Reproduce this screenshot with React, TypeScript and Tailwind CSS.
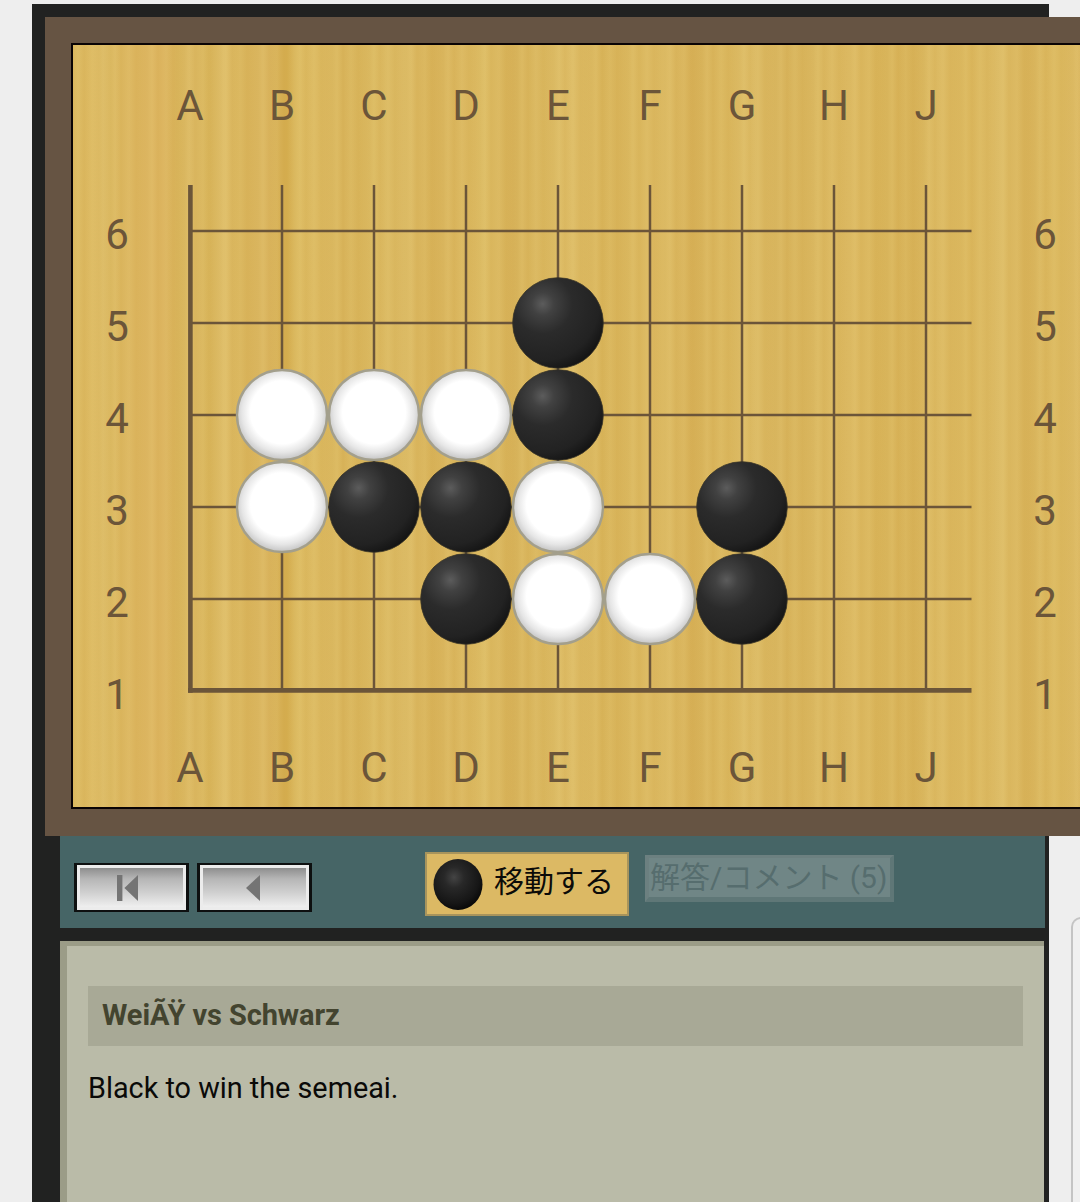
const cols = ["A", "B", "C", "D", "E", "F", "G", "H", "J"];
const rows = ["6", "5", "4", "3", "2", "1"];
const colX = (i: number) => 190.5 + i * 92;
const rowY = (i: number) => 231 + i * 92;
const whites: [number, number][] = [[282, 415], [374, 415], [466, 415], [282, 507], [558, 507], [558, 599], [650, 599]];
const blacks: [number, number][] = [[558, 323], [558, 415], [374, 507], [466, 507], [742, 507], [466, 599], [742, 599]];
const ink = "#6b5539";

function Board() {
  return (
    <svg viewBox="73 45 1010 762" className="block w-[1010px] h-[762px]">
      <defs>
        <radialGradient id="blackStone" cx="0.33" cy="0.29" r="0.78">
          <stop offset="0" stopColor="#5c5c5c" />
          <stop offset="0.16" stopColor="#414141" />
          <stop offset="0.42" stopColor="#2b2b2b" />
          <stop offset="0.8" stopColor="#222222" />
          <stop offset="1" stopColor="#121212" />
        </radialGradient>
        <radialGradient id="whiteStone" cx="0.5" cy="0.47" r="0.53">
          <stop offset="0" stopColor="#ffffff" />
          <stop offset="0.66" stopColor="#ffffff" />
          <stop offset="0.84" stopColor="#e6e6e6" />
          <stop offset="1" stopColor="#c4c4c4" />
        </radialGradient>
      </defs>
      {cols.map((c, i) => (
        <g key={c} fill={ink} fontSize="42" textAnchor="middle">
          <text x={colX(i) - 0.5} y="120">{c}</text>
          <text x={colX(i) - 0.5} y="782">{c}</text>
          {i > 0 && <line x1={colX(i) - 0.5} x2={colX(i) - 0.5} y1="185" y2="691" stroke={ink} strokeWidth="2.5" />}
        </g>
      ))}
      {rows.map((r, i) => (
        <g key={r} fill={ink} fontSize="42" textAnchor="middle">
          <text x="117" y={rowY(i) + 17.5}>{r}</text>
          <text x="1045" y={rowY(i) + 17.5}>{r}</text>
          {i < 5 && <line x1="190" x2="971.5" y1={rowY(i)} y2={rowY(i)} stroke={ink} strokeWidth="2.5" />}
        </g>
      ))}
      <line x1="190.4" x2="190.4" y1="185" y2="692.8" stroke={ink} strokeWidth="4.6" />
      <line x1="188" x2="971.5" y1="690.4" y2="690.4" stroke={ink} strokeWidth="4.6" />
      {whites.map(([x, y]) => (
        <circle key={`w${x}-${y}`} cx={x} cy={y} r="45" fill="url(#whiteStone)" stroke="#a39f8c" strokeWidth="2.4" />
      ))}
      {blacks.map(([x, y]) => (
        <circle key={`b${x}-${y}`} cx={x} cy={y} r="45.3" fill="url(#blackStone)" stroke="#3a3527" strokeWidth="0.8" />
      ))}
    </svg>
  );
}

function NavButton({ first }: { first?: boolean }) {
  return (
    <button className="w-[115px] h-[49px] box-border border-y-2 border-x-[3px] border-[#0e1010] p-0 shrink-0">
      <span
        className={
          first
            ? "flex items-center justify-center h-full border-[3px] border-[#ececec] bg-[linear-gradient(180deg,#8e8e8e_0%,#b6b6b6_28%,#cfcfcf_62%,#efefef_100%)] pr-[9px]"
            : "flex items-center justify-center h-full border-[3px] border-[#ececec] bg-[linear-gradient(180deg,#8e8e8e_0%,#b6b6b6_28%,#cfcfcf_62%,#efefef_100%)] pr-[4px]"
        }
      >
        {first ? (
          <svg width="21" height="26" viewBox="0 0 21 26">
            <rect x="0" y="0" width="5.4" height="26" fill="#747474" />
            <path d="M21 0 L21 26 L7.4 13 Z" fill="#747474" />
          </svg>
        ) : (
          <svg width="14" height="26" viewBox="0 0 14 26">
            <path d="M14 0 L14 26 L0 13 Z" fill="#747474" />
          </svg>
        )}
      </span>
    </button>
  );
}

export default function App() {
  return (
    <div className="flex w-[1080px] h-[1202px] overflow-hidden bg-[#eeeeee] pt-[4px] pl-[32px] font-[Roboto,'Noto_Sans_CJK_JP',sans-serif]">
      <div className="w-[1017px] h-[1198px] shrink-0 bg-[#212221] pt-[13px]">
        <div className="ml-[13px] w-[1045px] h-[819px] bg-[#665443] pt-[26px] pl-[26px]">
          <div className="w-[1019px] h-[766px] border-2 border-[#0a0405] bg-[repeating-linear-gradient(90deg,rgba(255,235,160,0)_0px,rgba(255,235,160,0.1)_5px,rgba(200,150,50,0.08)_11px,rgba(255,235,160,0.07)_19px,rgba(200,150,50,0.1)_26px,rgba(255,235,160,0)_37px),linear-gradient(90deg,#dab75e_0px,#dcb961_18px,#dfc06c_30px,#dab75f_38px,#dcb660_60px,#dcb45f_90px,#d9b55c_105px,#dbb862_120px,#d8b55b_135px,#debd68_150px,#d9b55c_165px,#dab55f_195px,#d5ae52_208px,#d5ae50_214px,#dbb95f_222px,#dcba62_245px,#d8b45b_270px,#dab85f_300px,#dcbb65_330px,#d8b35a_355px,#dab65e_385px,#dcbb63_410px,#d7b259_440px,#dab860_470px,#ddbc66_500px,#d8b45a_530px,#dab75e_560px,#dcba63_590px,#d7b158_620px,#dab75e_650px,#dcbb65_680px,#d7b35b_710px,#dab75f_745px,#dcb962_775px,#d9b55b_805px,#d7b258_835px,#dcba63_865px,#dab65c_895px,#ddbc66_925px,#d8b35a_955px,#dcba61_985px,#dab660_1015px)]">
            <Board />
          </div>
        </div>
        <div className="ml-[28px] mr-[4px] h-[92px] bg-[#466566] flex items-start pl-[14px]">
          <div className="flex gap-[8px] mt-[27px]">
            <NavButton first />
            <NavButton />
          </div>
          <div className="ml-[113px] mt-[16px] w-[204px] h-[64px] box-border border-2 border-[#a8945c] bg-[#dcb964] flex items-center pl-[6px] shrink-0">
            <svg width="50" height="51" viewBox="0 0 50 51" className="shrink-0">
              <defs>
                <radialGradient id="moverStone" cx="0.42" cy="0.36" r="0.68">
                  <stop offset="0" stopColor="#444444" />
                  <stop offset="0.3" stopColor="#282828" />
                  <stop offset="0.75" stopColor="#161616" />
                  <stop offset="1" stopColor="#060606" />
                </radialGradient>
              </defs>
              <ellipse cx="25" cy="25.5" rx="24.5" ry="25.5" fill="url(#moverStone)" />
            </svg>
            <span className="ml-[11px] mb-[5px] text-[30px] leading-none text-[#0c0b08] whitespace-nowrap">移動する</span>
          </div>
          <div className="ml-[16px] mt-[19px] w-[249px] h-[47px] box-border border-t-[3px] border-r-[4px] border-b-[5px] border-l-[4px] border-t-[#6c8080] border-r-[#5f7777] border-b-[#5f7777] border-l-[#6c8080] bg-[#708686] flex items-center shrink-0">
            <span className="ml-px mt-[1px] text-[30px] leading-none text-[#566d6e] whitespace-nowrap">解答/コメント (5)</span>
          </div>
        </div>
        <div className="mt-[13px] ml-[28px] mr-[5px] h-[261px] box-border border-t-[5px] border-l-[7px] border-[#9b9c87] bg-[#babba8] pt-[40px] pl-[21px] pr-[21px]">
          <div className="h-[60px] bg-[#a8a996] flex items-center pl-[14px] text-[29px] font-bold text-[#43442f] tracking-[-0.1px]">
            WeiÃŸ vs Schwarz
          </div>
          <p className="mt-[24px] text-[28.8px] leading-[36px] text-[#0a0a08]">Black to win the semeai.</p>
        </div>
      </div>
      <div className="ml-[22px] mt-[913px] w-[40px] h-[320px] shrink-0 box-border border-l-2 border-t-2 border-[#c4c4c4] rounded-tl-[10px] bg-[#f0f0f0]" />
    </div>
  );
}
